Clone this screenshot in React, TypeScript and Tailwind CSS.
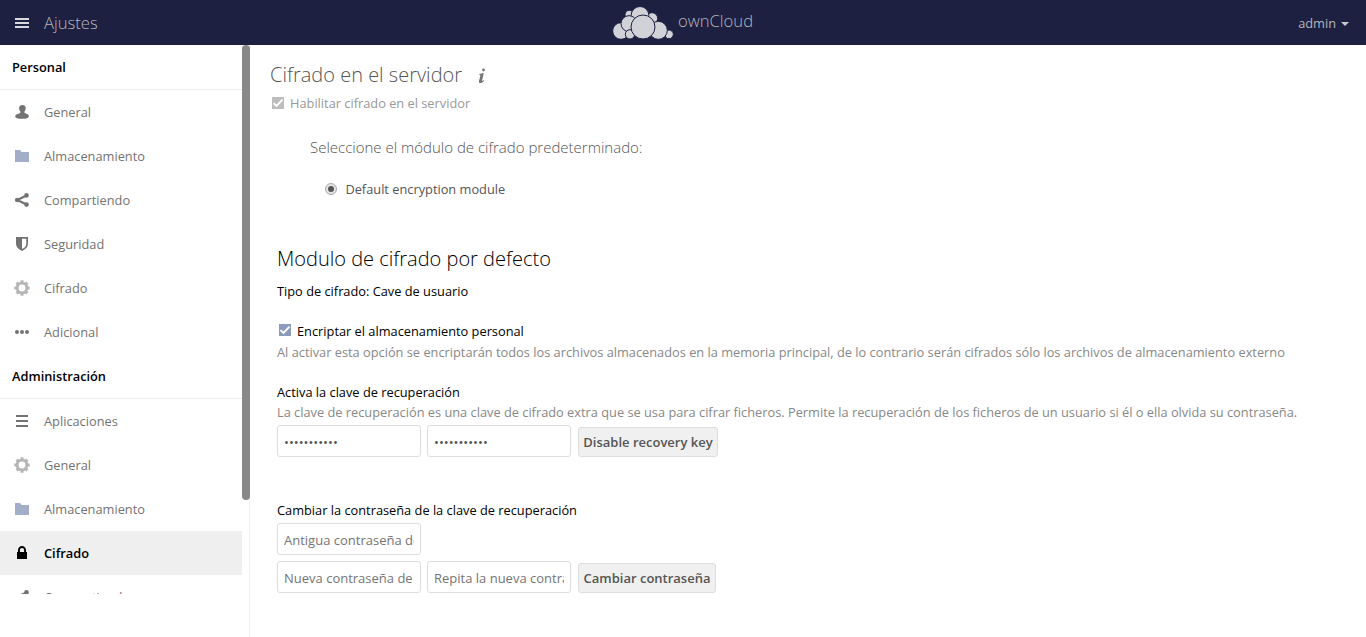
import type { ReactNode } from "react";

const Svg = ({ children, className = "" }: { children: ReactNode; className?: string }) => (
  <svg viewBox="0 0 16 16" className={`h-4 w-4 shrink-0 ${className}`} fill="currentColor">
    {children}
  </svg>
);

const UserIcon = () => (
  <Svg>
    <path d="M8.4 1C6.6 1 5.1 2 5.1 4c0 1.200.400 2.400 1.100 3.200.300.500.300 1.200.1 1.600-.3.500-1.700.8-2.800 1.200C2 10.400 1.200 11.400 1.200 12.500c0 1.600 3 2.300 6.800 2.300s6.800-.7 6.800-2.300c0-1.100-.5-2.100-1.500-2.500-1.100-.4-2.500-.7-2.800-1.200-.2-.4-.2-1.100.1-1.600.7-.8 1.100-2 1.100-3.200 0-2-1.500-3-3.300-3z" />
  </Svg>
);
const FolderIcon = () => (
  <Svg className="text-[#a2adc8]">
    <path d="M1 2h5.200l1.300 2H15v10H1z" />
  </Svg>
);
const ShareIcon = () => (
  <Svg>
    <circle cx="3.200" cy="8" r="2.300" />
    <circle cx="12.500" cy="3.400" r="2.300" />
    <circle cx="12.500" cy="12.600" r="2.300" />
    <path d="M12.500 3.400 3.200 8l9.300 4.600" fill="none" stroke="currentColor" strokeWidth="2.200" />
  </Svg>
);
const ShieldIcon = () => (
  <Svg>
    <path
      fillRule="evenodd"
      d="M2 1h12v7c0 3-2.500 5.200-6 7-3.500-1.800-6-4-6-7zm6 1.800v10.300c2.600-1.400 4.300-3 4.300-5.200V2.800z"
    />
  </Svg>
);
const GearIcon = () => (
  <Svg className="text-[#b6b6b6]">
    <circle cx="8" cy="8" r="4.850" fill="none" stroke="currentColor" strokeWidth="2.900" />
    <path
      d="M8 .3v3M8 12.700v3M.3 8h3M12.700 8h3M2.600 2.600l2 2M11.400 11.400l2 2M13.400 2.600l-2 2M4.600 11.400l-2 2"
      stroke="currentColor"
      strokeWidth="3"
    />
  </Svg>
);
const MoreIcon = () => (
  <Svg>
    <circle cx="3" cy="8" r="2" />
    <circle cx="8" cy="8" r="2" />
    <circle cx="13" cy="8" r="2" />
  </Svg>
);
const ListIcon = () => (
  <Svg>
    <path d="M2 2h12v2H2zM2 7h12v2H2zM2 12h12v2H2z" />
  </Svg>
);
const LockIcon = () => (
  <Svg>
    <path
      fillRule="evenodd"
      d="M8 1C5.800 1 4 2.800 4 5v2H3v7h10V7h-1V5c0-2.200-1.800-4-4-4zm0 1.900c1.200 0 2.100.9 2.100 2.100v2H5.900V5c0-1.200.9-2.100 2.100-2.100z"
    />
  </Svg>
);

const Logo = () => (
  <svg viewBox="36 15 189 102" className="h-[34px] w-[63px]" fill="#d1d1d8" stroke="#1d2040" strokeWidth="3">
    <circle cx="88" cy="41" r="13" />
    <circle cx="156" cy="52" r="17" />
    <circle cx="120" cy="43" r="26.500" />
    <circle cx="63" cy="90" r="25" />
    <circle cx="87" cy="68" r="24" />
    <circle cx="90" cy="100" r="14" />
    <circle cx="207" cy="100" r="13" />
    <circle cx="175" cy="88" r="27" />
    <circle cx="129" cy="78" r="36" />
  </svg>
);

const NavHeading = ({ children }: { children: ReactNode }) => (
  <h3 className="h-[45px] border-b border-[#eee] pl-3 font-semibold leading-[44px] text-black">{children}</h3>
);

const NavItem = ({ icon, label, active = false }: { icon: ReactNode; label: string; active?: boolean }) => (
  <li
    className={`flex h-11 items-center gap-3.5 pl-3.5 ${
      active ? "bg-[#efefef] font-semibold text-black" : "text-[#737373]"
    }`}
  >
    {icon}
    <span className="leading-[44px]">{label}</span>
  </li>
);

const Check = ({ className }: { className: string }) => (
  <svg viewBox="0 0 12 12" className={`h-3 w-3 shrink-0 ${className}`}>
    <path d="M0 0h12v12H0z" fill="currentColor" />
    <path d="M1.500 6.100l3 2.800 6-6.300" fill="none" stroke="#fff" strokeWidth="1.900" />
  </svg>
);

const Field = ({ value, placeholder }: { value?: string; placeholder?: string }) => (
  <input
    type={value ? "password" : "text"}
    defaultValue={value}
    placeholder={placeholder}
    className="mr-1.5 h-8 w-36 rounded-[3px] border border-[#ddd] bg-white px-1.5 pt-px text-[13px] text-[#555] placeholder:text-[#757575]"
  />
);

const Button = ({ children, className }: { children: ReactNode; className: string }) => (
  <button
    className={`ml-px mt-0.5 h-[30px] whitespace-nowrap rounded-[3px] border border-[#ddd] bg-[#f0f0f0] text-center text-[13px] font-semibold text-[#555] ${className}`}
  >
    {children}
  </button>
);

export default function App() {
  return (
    <div className="flex h-[637px] w-[1366px] flex-col overflow-hidden bg-white font-['Open_Sans',sans-serif] text-[12.8px]">
      <header className="grid h-[45px] shrink-0 grid-cols-3 bg-[#1d2040] text-[#b4b5be]">
        <div className="flex items-center pl-3.5">
          <svg viewBox="0 0 16 16" className="h-4 w-4" fill="#d8d8de">
            <path d="M1 3h14v2H1zM1 7h14v2H1zM1 11h14v2H1z" />
          </svg>
          <span className="ml-3.5 text-[16.64px] font-light">Ajustes</span>
        </div>
        <div className="flex items-center justify-center">
          <Logo />
          <span className="mb-1 ml-[3px] mr-px text-[16.64px] font-light">ownCloud</span>
        </div>
        <div className="flex items-center justify-end pr-[17px]">
          <span className="leading-[46px]">admin</span>
          <svg viewBox="0 0 8 4" className="ml-[5px] mt-0.5 h-1 w-2" fill="#c8c8cf">
            <path d="M0 0h8L4 4z" />
          </svg>
        </div>
      </header>

      <div className="flex min-h-0 flex-1">
        <aside className="relative w-[250px] shrink-0 border-r border-[#eee]">
          <nav className="h-[549px] w-[242px] overflow-hidden">
            <NavHeading>Personal</NavHeading>
            <ul>
              <NavItem icon={<UserIcon />} label="General" />
              <NavItem icon={<FolderIcon />} label="Almacenamiento" />
              <NavItem icon={<ShareIcon />} label="Compartiendo" />
              <NavItem icon={<ShieldIcon />} label="Seguridad" />
              <NavItem icon={<GearIcon />} label="Cifrado" />
              <NavItem icon={<MoreIcon />} label="Adicional" />
            </ul>
            <NavHeading>Administración</NavHeading>
            <ul>
              <NavItem icon={<ListIcon />} label="Aplicaciones" />
              <NavItem icon={<GearIcon />} label="General" />
              <NavItem icon={<FolderIcon />} label="Almacenamiento" />
              <NavItem icon={<LockIcon />} label="Cifrado" active />
              <NavItem icon={<ShareIcon />} label="Compartiendo" />
            </ul>
          </nav>
          <div className="absolute -right-px top-0 h-[455px] w-2 rounded bg-[#888]" />
        </aside>

        <main className="min-w-0 flex-1 whitespace-nowrap pl-5 leading-5">
          <div className="mt-4 flex h-7 items-center text-[#555]">
            <h2 className="text-xl font-light">Cifrado en el servidor</h2>
            <svg viewBox="0 0 8 16" className="ml-4 mt-0.5 h-4 w-2" fill="#777">
              <circle cx="5.500" cy="2" r="1.400" />
              <path d="M1.300 6 5.800 5 4.100 12.200c-.2.900.4.900 1.700-.2l.4.500C4.700 14.500 3.500 15 2.300 15c-1.200 0-1.600-.8-1.300-2.100l1.300-5.200c.2-.8-.2-.9-1.200-.9z" />
            </svg>
          </div>
          <div className="mt-1 flex h-5 items-center pl-0.5 text-[#999]">
            <Check className="text-[#bdbdbd]" />
            <span className="ml-1.5">Habilitar cifrado en el servidor</span>
          </div>
          <p className="ml-10 mt-6 h-5 text-[15px] font-light text-[#555]">
            Seleccione el módulo de cifrado predeterminado:
          </p>
          <div className="ml-[55px] mt-[22px] flex h-5 items-center text-[#555]">
            <svg viewBox="0 0 12 12" className="h-3 w-3">
              <circle cx="6" cy="6" r="5.500" fill="#e4e4e4" stroke="#aaa" />
              <circle cx="6" cy="6" r="3" fill="#555" />
            </svg>
            <span className="ml-[8.400px]">Default encryption module</span>
          </div>

          <section className="ml-[7px] text-black">
            <h2 className="mt-[46px] h-7 text-xl font-light leading-7">Modulo de cifrado por defecto</h2>
            <p className="mt-2 h-5">Tipo de cifrado: Cave de usuario</p>
            <div className="mt-5 flex h-5 items-center pl-0.5">
              <Check className="mb-0.5 text-[#8c9bbd]" />
              <span className="ml-1.5">Encriptar el almacenamiento personal</span>
            </div>
            <p className="mt-px h-5 text-[#888]">
              Al activar esta opción se encriptarán todos los archivos almacenados en la memoria principal, de lo
              contrario serán cifrados sólo los archivos de almacenamiento externo
            </p>
            <p className="mt-5 h-5">Activa la clave de recuperación</p>
            <p className="h-5 text-[#888]">
              La clave de recuperación es una clave de cifrado extra que se usa para cifrar ficheros. Permite la
              recuperación de los ficheros de un usuario si él o ella olvida su contraseña.
            </p>
            <div className="mt-[3px] flex">
              <Field value="recoverykey" />
              <Field value="recoverykey" />
              <Button className="w-[140px]">Disable recovery key</Button>
            </div>
            <p className="mt-[43px] h-5">Cambiar la contraseña de la clave de recuperación</p>
            <div className="mt-[3px] flex">
              <Field placeholder="Antigua contraseña de recuperación" />
            </div>
            <div className="mt-1.5 flex">
              <Field placeholder="Nueva contraseña de recuperación" />
              <Field placeholder="Repita la nueva contraseña de recuperación" />
              <Button className="w-[138px]">Cambiar contraseña</Button>
            </div>
          </section>
        </main>
      </div>
    </div>
  );
}
